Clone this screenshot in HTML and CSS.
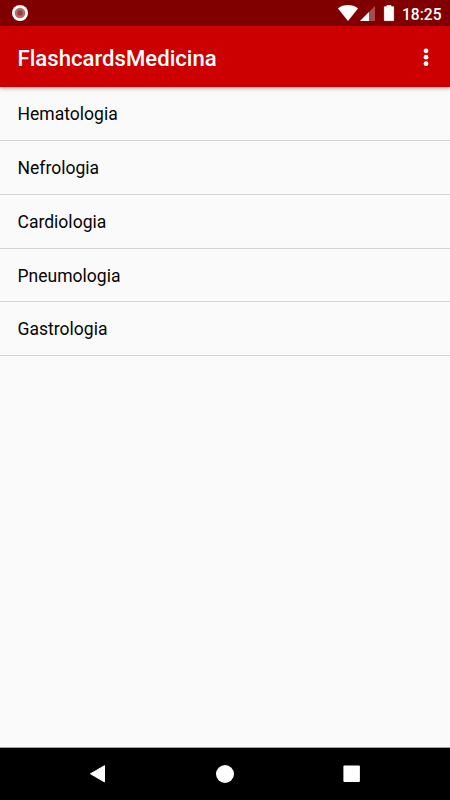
FILE: index.html
```html
<!DOCTYPE html>
<html lang="pt">
<head>
<meta charset="utf-8">
<title>FlashcardsMedicina</title>
<link rel="stylesheet" href="styles.css">
</head>
<body>
<div class="screen">
  <header class="status">
    <svg class="record" viewBox="0 0 16 16"><circle cx="8" cy="8" r="8" fill="#fff"/><circle cx="8" cy="8" r="5.3" fill="#b76b6b"/><circle cx="8" cy="8" r="2.7" fill="#954040"/></svg>
    <svg class="indicators" viewBox="0 0 58 18">
      <path d="M0 3.4C5.8-1 14.2-1 20 3.4L10 16z" fill="#fff"/>
      <path d="M22 16L37 1V16z" fill="#a64d4d"/>
      <path d="M22 16L31 7V16z" fill="#fff"/>
      <path d="M46.4 1.8h2.6V.4h4v1.4h2.6V15.6h-9.2z" fill="#fff" stroke="#fff" stroke-width=".8" stroke-linejoin="round"/>
    </svg>
    <span class="clock">18:25</span>
  </header>
  <div class="toolbar">
    <h1>FlashcardsMedicina</h1>
    <svg class="more" viewBox="0 0 6 20"><circle cx="3" cy="3.8" r="2.4"/><circle cx="3" cy="10.2" r="2.4"/><circle cx="3" cy="16.7" r="2.4"/></svg>
  </div>
  <ul class="list">
    <li>Hematologia</li>
    <li>Nefrologia</li>
    <li>Cardiologia</li>
    <li>Pneumologia</li>
    <li>Gastrologia</li>
  </ul>
  <nav class="navbar">
    <svg viewBox="0 0 20 20"><path d="M1.5 9.8L15.5 1.7V17.9z" stroke="#fff" stroke-width="1" stroke-linejoin="round"/></svg>
    <svg viewBox="0 0 20 20"><circle cx="10" cy="10" r="9"/></svg>
    <svg viewBox="0 0 20 20"><rect x="1.4" y="1.4" width="16.5" height="16.5" rx="1"/></svg>
  </nav>
</div>
</body>
</html>
```
FILE: styles.css
```css
* { box-sizing: border-box; margin: 0; padding: 0; }
body { font-family: Roboto, "Liberation Sans", sans-serif; background: #fafafa; }
svg { display: block; flex: none; }
.screen { height: 800px; display: flex; flex-direction: column; overflow: hidden; }
.status {
  height: 26px; flex: none; display: flex; align-items: center;
  padding: 0 9px 0 12px; background: #800000; color: #fff;
}
.record { width: 16px; height: 16px; }
.indicators { width: 58px; height: 18px; margin-left: auto; margin-top: 2px; }
.clock { width: 39px; margin-left: 6px; margin-top: 3px; font-size: 15.6px; font-weight: 500; line-height: 20px; white-space: nowrap; }
.toolbar {
  height: 61px; flex: none; display: flex; align-items: center; justify-content: space-between;
  padding: 0 21px 0 17.5px; background: #cc0000; color: #fff;
  box-shadow: 0 1px 4px rgba(0, 0, 0, .42);
  position: relative;
}
h1 { font-size: 22.15px; font-weight: 500; line-height: 28px; padding-top: 3px; }
.more { width: 6px; height: 20px; fill: #fff; }
.list { flex: 1; list-style: none; padding-top: .3px; }
.list li {
  height: 53.76px; padding: 0 17.5px; border-bottom: 1px solid #d5d5d5;
  font-size: 17.55px; line-height: 55px; color: #050505;
}
.navbar {
  height: 53px; flex: none; display: flex; align-items: center; justify-content: center; gap: 106.5px;
  background: #000; border-top: 1px solid #a0a0a0;
}
.navbar svg { width: 20px; height: 20px; fill: #fff; }
```
